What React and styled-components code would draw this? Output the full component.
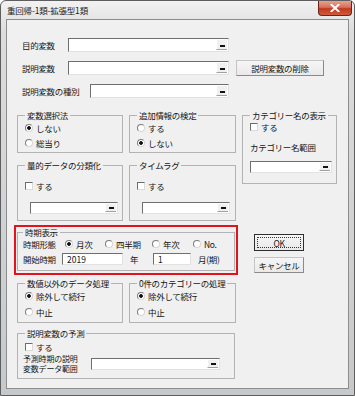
import React from 'react';
import styled, { createGlobalStyle } from 'styled-components';

const GlobalStyle = createGlobalStyle`
  html, body {
    margin: 0;
    padding: 0;
    background: #ffffff;
  }
  body {
    font-family: "Noto Sans CJK JP", "Noto Sans", sans-serif;
    color: #151515;
  }
  * {
    box-sizing: border-box;
  }
`;

const Window = styled.div`
  width: 355px;
  height: 396px;
  border: 1px solid #5e5e5e;
  border-radius: 6px 6px 0 0;
  padding: 0 5px 6px 5px;
  background: linear-gradient(180deg, #f2f2f2 0%, #dcdcdc 8%, #cfd2d5 60%, #c6c9cc 100%);
  display: flex;
  flex-direction: column;
`;

const TitleBar = styled.div`
  height: 18px;
  display: flex;
  align-items: flex-start;
  justify-content: space-between;
  padding-left: 1px;
  margin-right: -3px;
`;

const Title = styled.span`
  font-size: 8.5px;
  line-height: 18px;
  color: #1c1c1c;
  letter-spacing: -0.2px;
`;

const CloseButton = styled.div`
  width: 34px;
  height: 15px;
  border: 1px solid #6b2419;
  border-top: none;
  border-radius: 0 0 4px 4px;
  background: linear-gradient(180deg, #e8a291 0%, #d5705a 45%, #c0391f 55%, #cf5a3e 100%);
  display: flex;
  align-items: center;
  justify-content: center;
`;

const Client = styled.div`
  flex: 1;
  background: #f0f0f0;
  border: 1px solid #8d8d8d;
  display: flex;
  flex-direction: column;
`;

const FieldList = styled.div`
  display: flex;
  flex-direction: column;
  gap: 9px;
  padding: 18px 0 0 15px;
`;

const FieldRow = styled.div`
  height: 14px;
  display: flex;
  align-items: center;
`;

const FieldLabel = styled.span`
  width: ${(p) => p.$w}px;
  font-size: 8.5px;
  line-height: 12px;
  white-space: nowrap;
  letter-spacing: -0.3px;
`;

const RefEdit = styled.div`
  width: ${(p) => p.$w}px;
  height: ${(p) => p.$h || 14}px;
  margin-left: ${(p) => p.$ml || 0}px;
  background: #ffffff;
  border: 1px solid;
  border-color: #6f6f6f #e2e2e2 #e2e2e2 #6f6f6f;
  display: flex;
  align-items: stretch;
  flex-shrink: 0;
`;

const RefValue = styled.span`
  flex: 1;
  font-size: 8.5px;
  line-height: ${(p) => (p.$h || 14) - 2}px;
  padding-left: 4px;
`;

const RefButton = styled.span`
  width: 11px;
  margin: 1px;
  background: #f0f0f0;
  border-left: 1px solid #ffffff;
  border-bottom: 1px solid #a0a0a0;
  display: flex;
  align-items: flex-end;
  justify-content: center;
  padding-bottom: 2px;

  &::after {
    content: '';
    width: 5px;
    height: 2px;
    background: #111111;
  }
`;

const PushButton = styled.div`
  width: ${(p) => p.$w}px;
  height: ${(p) => p.$h}px;
  margin-left: ${(p) => p.$ml || 0}px;
  font-size: 8.5px;
  letter-spacing: -0.3px;
  display: flex;
  align-items: center;
  justify-content: center;
  background: linear-gradient(180deg, #f6f6f6 0%, #e9e9e9 100%);
  border: 1px solid;
  border-color: ${(p) => (p.$default ? '#2d2d2d' : '#c4c4c4 #8a8a8a #8a8a8a #c4c4c4')};
  position: relative;

  ${(p) =>
    p.$default &&
    `
    &::before {
      content: '';
      position: absolute;
      inset: 2px;
      border: 1px dotted #333333;
    }
  `}
`;

const GroupArea = styled.div`
  display: flex;
  margin-top: 12px;
  padding-left: 7px;
`;

const LeftColumn = styled.div`
  width: 224px;
  display: flex;
  flex-direction: column;
`;

const RightColumn = styled.div`
  margin-left: 4px;
  display: flex;
  flex-direction: column;
`;

const GroupRow = styled.div`
  display: flex;
  gap: 6px;
  margin-top: ${(p) => p.$mt || 0}px;
  padding-left: 3px;
`;

const Group = styled.fieldset`
  margin: 0;
  width: ${(p) => p.$w}px;
  height: ${(p) => p.$h}px;
  padding: ${(p) => p.$pt || 0}px 4px 0 ${(p) => (p.$pl === undefined ? 7 : p.$pl)}px;
  border: 1px solid #b3b3b3;
  display: flex;
  flex-direction: column;
  gap: ${(p) => p.$gap || 0}px;
  min-width: 0;
`;

const Legend = styled.legend`
  font-size: 8.5px;
  line-height: 10px;
  padding: 0 2px;
  letter-spacing: -0.3px;
  white-space: nowrap;
`;

const Option = styled.label`
  height: 12px;
  display: flex;
  align-items: center;
  gap: 3px;
  font-size: 8.5px;
  letter-spacing: -0.3px;
  white-space: nowrap;
  width: ${(p) => (p.$w ? `${p.$w}px` : 'auto')};
  flex-shrink: 0;
`;

const Radio = styled.span`
  width: 8px;
  height: 8px;
  border-radius: 50%;
  border: 1px solid;
  border-color: #7c7c7c #d6d6d6 #d6d6d6 #7c7c7c;
  background: ${(p) =>
    p.$on ? 'radial-gradient(circle, #111 0 1.5px, #fff 2.2px)' : '#ffffff'};
  flex-shrink: 0;
`;

const Check = styled.span`
  width: 8px;
  height: 8px;
  border: 1px solid;
  border-color: #6c6c6c #dadada #dadada #6c6c6c;
  background: #ffffff;
  flex-shrink: 0;
`;

const PlainText = styled.span`
  font-size: 8.5px;
  line-height: 12px;
  height: 12px;
  letter-spacing: -0.3px;
  white-space: nowrap;
  margin-top: ${(p) => p.$mt || 0}px;
  margin-left: ${(p) => p.$ml || 0}px;
  width: ${(p) => (p.$w ? `${p.$w}px` : 'auto')};
  flex-shrink: 0;
`;

const Highlight = styled.div`
  margin-top: 4px;
  height: 50px;
  border: 2px solid #e3121c;
  padding-left: 1px;
`;

const InlineRow = styled.div`
  display: flex;
  align-items: center;
  height: ${(p) => p.$h || 12}px;
  margin-top: ${(p) => p.$mt || 0}px;
`;

const TwoLineLabel = styled.div`
  width: 68px;
  margin-left: -2px;
  display: flex;
  flex-direction: column;
`;

const LabelLine = styled.span`
  height: 10px;
  font-size: 8px;
  line-height: 10px;
  letter-spacing: -0.2px;
  white-space: nowrap;
`;

const ButtonStack = styled.div`
  margin: 50px 0 0 12px;
  display: flex;
  flex-direction: column;
  gap: 6px;
`;

const TextBox = styled.div`
  width: ${(p) => p.$w}px;
  height: 12px;
  background: #ffffff;
  border: 1px solid;
  border-color: #6f6f6f #e2e2e2 #e2e2e2 #6f6f6f;
  font-size: 8.5px;
  line-height: 10px;
  padding-left: 4px;
  flex-shrink: 0;
`;

const CloseGlyph = () => (
  <svg width="10" height="8" viewBox="0 0 10 8">
    <path d="M1.5 0.8 L8.5 7.2 M8.5 0.8 L1.5 7.2" stroke="#ffffff" strokeWidth="2" strokeLinecap="square" />
  </svg>
);

const Field = ({ w, h, ml, value }) => (
  <RefEdit $w={w} $h={h} $ml={ml}>
    <RefValue $h={h}>{value}</RefValue>
    <RefButton />
  </RefEdit>
);

const RadioOption = ({ on, w, children }) => (
  <Option $w={w}>
    <Radio $on={on} />
    {children}
  </Option>
);

const CheckOption = ({ children }) => (
  <Option>
    <Check />
    {children}
  </Option>
);

export default function App() {
  return (
    <>
      <GlobalStyle />
      <Window>
        <TitleBar>
          <Title>重回帰-1類-拡張型1類</Title>
          <CloseButton>
            <CloseGlyph />
          </CloseButton>
        </TitleBar>
        <Client>
          <FieldList>
            <FieldRow>
              <FieldLabel $w={46}>目的変数</FieldLabel>
              <Field w={161} />
            </FieldRow>
            <FieldRow>
              <FieldLabel $w={46}>説明変数</FieldLabel>
              <Field w={161} />
              <PushButton $w={88} $h={16} $ml={7}>
                説明変数の削除
              </PushButton>
            </FieldRow>
            <FieldRow>
              <FieldLabel $w={68}>説明変数の種別</FieldLabel>
              <Field w={139} />
            </FieldRow>
          </FieldList>

          <GroupArea>
            <LeftColumn>
              <GroupRow>
                <Group $w={106} $h={43} $pt={2} $gap={3}>
                  <Legend>変数選択法</Legend>
                  <RadioOption on>しない</RadioOption>
                  <RadioOption>総当り</RadioOption>
                </Group>
                <Group $w={107} $h={43} $pt={2} $gap={3}>
                  <Legend>追加情報の検定</Legend>
                  <RadioOption>する</RadioOption>
                  <RadioOption on>しない</RadioOption>
                </Group>
              </GroupRow>

              <GroupRow $mt={7}>
                <Group $w={106} $h={61} $pt={10} $gap={10}>
                  <Legend>量的データの分類化</Legend>
                  <CheckOption>する</CheckOption>
                  <Field w={88} h={12} ml={5} />
                </Group>
                <Group $w={107} $h={61} $pt={10} $gap={10}>
                  <Legend>タイムラグ</Legend>
                  <CheckOption>する</CheckOption>
                  <Field w={88} h={12} ml={5} />
                </Group>
              </GroupRow>

              <Highlight>
                <Group $w={218} $h={44} $pt={1} $gap={3} $pl={5}>
                  <Legend>時期表示</Legend>
                  <InlineRow>
                    <PlainText $w={42}>時期形態</PlainText>
                    <RadioOption on w={40}>月次</RadioOption>
                    <RadioOption w={47}>四半期</RadioOption>
                    <RadioOption w={41}>年次</RadioOption>
                    <RadioOption>No.</RadioOption>
                  </InlineRow>
                  <InlineRow>
                    <PlainText $w={39}>開始時期</PlainText>
                    <TextBox $w={61}>2019</TextBox>
                    <PlainText $w={23} $ml={7}>年</PlainText>
                    <TextBox $w={38}>1</TextBox>
                    <PlainText $ml={7}>月(期)</PlainText>
                  </InlineRow>
                </Group>
              </Highlight>

              <GroupRow $mt={3}>
                <Group $w={106} $h={45} $pt={2} $gap={4}>
                  <Legend>数値以外のデータ処理</Legend>
                  <RadioOption on>除外して続行</RadioOption>
                  <RadioOption>中止</RadioOption>
                </Group>
                <Group $w={107} $h={45} $pt={2} $gap={4}>
                  <Legend>0件のカテゴリーの処理</Legend>
                  <RadioOption on>除外して続行</RadioOption>
                  <RadioOption>中止</RadioOption>
                </Group>
              </GroupRow>

              <GroupRow $mt={5}>
                <Group $w={218} $h={51} $pt={3} $gap={1}>
                  <Legend>説明変数の予測</Legend>
                  <CheckOption>する</CheckOption>
                  <InlineRow $h={20}>
                    <TwoLineLabel>
                      <LabelLine>予測時期の説明</LabelLine>
                      <LabelLine>変数データ範囲</LabelLine>
                    </TwoLineLabel>
                    <Field w={129} h={12} />
                  </InlineRow>
                </Group>
              </GroupRow>
            </LeftColumn>

            <RightColumn>
              <Group $w={95} $h={74} $pt={1}>
                <Legend>カテゴリー名の表示</Legend>
                <CheckOption>する</CheckOption>
                <PlainText $mt={8}>カテゴリー名範囲</PlainText>
                <InlineRow $mt={8}>
                  <Field w={82} h={12} />
                </InlineRow>
              </Group>
              <ButtonStack>
                <PushButton $w={50} $h={17} $default>
                  OK
                </PushButton>
                <PushButton $w={50} $h={16}>
                  キャンセル
                </PushButton>
              </ButtonStack>
            </RightColumn>
          </GroupArea>
        </Client>
      </Window>
    </>
  );
}
